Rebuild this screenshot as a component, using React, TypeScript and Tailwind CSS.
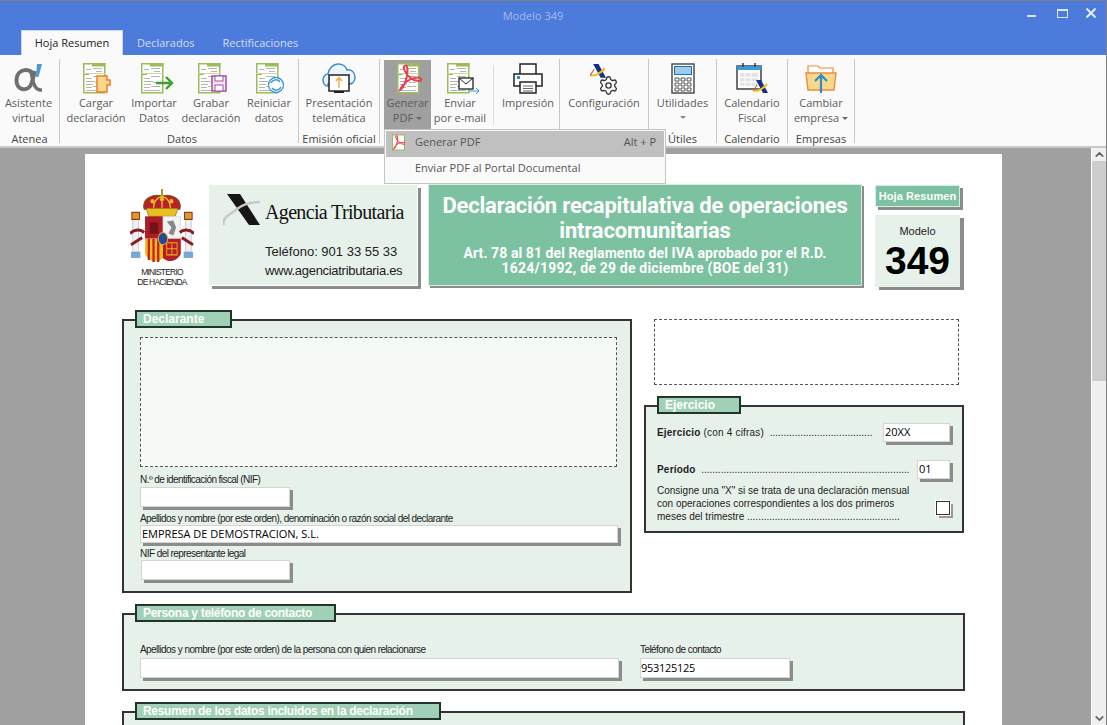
import type { ReactNode } from "react";
import { ChevronDown, ChevronUp, Settings } from "lucide-react";

const DocBase = ({ children, narrow }: { children?: ReactNode; narrow?: boolean }) => (
  <svg className="overflow-visible" width={narrow ? 22 : 26} height="31" viewBox={narrow ? "0 0 22 31" : "0 0 26 31"} fill="none">
    <rect x="0.75" y="0.75" width="21" height="29" fill="#fff" stroke="#9cbc59" strokeWidth="1.5" />
    <rect x="9" y="0" width="13.5" height="3.5" fill="#9cbc59" />
    <rect x="0" y="10" width="6" height="2" fill="#9cbc59" />
    <line x1="0" y1="10.5" x2="22" y2="10.5" stroke="#c9d9a0" />
    <path d="M3 6.5h5M10 5.5h9M13 8.5h6M10 13.5h9M3 15.5h6M3 18.5h9M12 19.5h7M3 21.5h7M3 24.5h6M10 23.5h9M3 27.5h16" stroke="#b5b5b5" />
    {children}
  </svg>
);

const AlphaIcon = () => (
  <svg width="30" height="31" viewBox="0 0 30 31" fill="none">
    <path d="M21 13C18 5 3 4 2.5 17C2 28 15 30 18 19L21 8" stroke="#6f6f6f" strokeWidth="4" />
    <path d="M17 9C19 18 20 28 28 27" stroke="#6f6f6f" strokeWidth="3.4" />
    <path d="M23 1H28L24.5 14H22Z" fill="#4b9ad4" />
  </svg>
);

const CloudIcon = () => (
  <svg width="34" height="31" viewBox="0 0 34 31" fill="none">
    <path d="M6 23C2 23 1 19 1 17C1 13 4 11 6 11C7 5 11 1 16 1C21 1 24 4 25 7C29 6 33 9 33 14C33 19 30 21 27 21H6Z" fill="#eaf5fc" stroke="#3b8fd0" strokeWidth="1.5" />
    <rect x="7" y="12" width="20" height="16" fill="#fff" stroke="#222" strokeWidth="1.5" />
    <rect x="12" y="28" width="10" height="2" fill="#222" />
    <path d="M17 25V15M14 18L17 14.5L20 18" stroke="#f0a830" strokeWidth="1.3" />
  </svg>
);

const PrinterIcon = () => (
  <svg width="30" height="31" viewBox="0 0 30 31" fill="none" stroke="#222" strokeWidth="1.5">
    <path d="M7 11V1H23V11" fill="#fff" />
    <path d="M7 23H1V11H29V23H23" fill="#fff" />
    <rect x="7" y="19" width="16" height="11" fill="#fff" />
    <path d="M10 23H20M10 25.5H20M10 28H20" strokeWidth="1" stroke="#666" />
    <rect x="4" y="13" width="3" height="3" fill="#2a8fd0" stroke="none" />
  </svg>
);

const AeatMark = ({ className, size = 16 }: { className?: string; size?: number }) => (
  <svg className={className} width={size} height={size} viewBox="0 0 16 16" fill="none">
    <path d="M3 0H8L15 13H10Z" fill="#10308c" />
    <path d="M0 10C3 12 9 10 14 4" stroke="#f0c020" strokeWidth="2" />
    <path d="M0 11L4 5" stroke="#e04040" strokeWidth="1" />
  </svg>
);

const ConfigIcon = () => (
  <span className="relative block w-[32px] h-[31px]">
    <AeatMark size={17} className="absolute left-[2px] top-[1px]" />
    <Settings size={21} strokeWidth={1.5} color="#333" className="absolute left-[10px] top-[12px]" />
  </span>
);

const CalculatorIcon = () => (
  <svg width="24" height="31" viewBox="0 0 24 31" fill="none">
    <rect x="1" y="1" width="22" height="29" fill="#fff" stroke="#444" strokeWidth="1.4" />
    <rect x="3.5" y="3.5" width="17" height="8" fill="#9ccdf0" stroke="#1f70b0" />
    <path d="M4 15h4v3H4zM10 15h4v3h-4zM16 15h4v3h-4zM4 20h4v3H4zM10 20h4v3h-4zM16 20h4v3h-4zM4 25h4v3H4zM10 25h4v3h-4zM16 25h4v3h-4z" stroke="#555" />
  </svg>
);

const CalendarIcon = () => (
  <span className="relative block w-[32px] h-[31px]">
    <svg width="26" height="28" viewBox="0 0 26 28" fill="none">
      <rect x="1" y="3" width="24" height="23" fill="#fff" stroke="#333" strokeWidth="1.4" />
      <rect x="1" y="3" width="24" height="4" fill="#3a9ad6" />
      <path d="M7 0V4M19 0V4" stroke="#333" strokeWidth="1.4" />
      <path d="M4 10h18v13H4z" fill="#e4e4e4" />
      <path d="M4 14.5H22M4 19H22M9 10V23M15 10V23" stroke="#fff" />
    </svg>
    <AeatMark className="absolute left-[17px] top-[17px]" />
  </span>
);

const FolderIcon = () => (
  <svg width="32" height="29" viewBox="0 0 32 29" fill="none">
    <path d="M3 8V1H13L15 3H28V8" fill="#fff" stroke="#ef8a3c" strokeWidth="1.2" />
    <path d="M1 8H31L29 25H3Z" fill="#f8d98c" stroke="#ef8a3c" strokeWidth="1.4" />
    <path d="M16 28V11M10 16L16 10L22 16" stroke="#2a8ccc" strokeWidth="2.2" />
  </svg>
);

const PdfSwirl = () => (
  <path d="M3 27C7 25 12 11 10 4C9 1 6 3 7 6C9 12 16 19 23 18C26 17 24 14 20 14.5C13 15 6 20 3 27Z" stroke="#e8404f" strokeWidth="2" fill="none" />
);

const ShieldLogo = () => (
  <svg width="64" height="75" viewBox="0 0 68 74" preserveAspectRatio="none" fill="none">
    <path d="M34 0V6" stroke="#b08a20" strokeWidth="2" />
    <path d="M15 20C12 10 24 4 34 7C44 4 56 10 53 20Z" fill="#b8202a" stroke="#7a5a10" />
    <path d="M34 7C28 9 25 13 25 19M34 7C40 9 43 13 43 19M34 7V19" stroke="#eac020" strokeWidth="1.4" />
    <path d="M17 19H51L48 27H20Z" fill="#eac020" stroke="#7a5a10" strokeWidth="0.6" />
    <circle cx="24" cy="12" r="2.2" fill="#eac020" />
    <circle cx="34" cy="10" r="2.2" fill="#eac020" />
    <circle cx="44" cy="12" r="2.2" fill="#eac020" />
    <rect x="16" y="27" width="19" height="22" fill="#b01c24" />
    <rect x="35" y="27" width="19" height="22" fill="#f2f2f2" stroke="#ccc" strokeWidth="0.5" />
    <path d="M39 32L46 31L49 38L46 46L41 44L44 38Z" fill="#888" />
    <path d="M16 49H35V68C28 74 20 72 16 64Z" fill="#eeba24" />
    <path d="M20 49V70M25 49V72M30 49V72" stroke="#c4202a" strokeWidth="2.4" />
    <path d="M35 49H54V64C50 72 40 73 35 68Z" fill="#b81c24" />
    <path d="M39 53H50V65H39ZM39 59H50M44.5 53V65" stroke="#e2b020" />
    <path d="M21 33H30V44H21Z" fill="#701418" />
    <ellipse cx="35" cy="49" rx="5" ry="6" fill="#2248a0" stroke="#e2b020" />
    <rect x="3" y="30" width="6" height="32" fill="#f0f0f0" stroke="#ccc" />
    <rect x="59" y="30" width="6" height="32" fill="#f0f0f0" stroke="#ccc" />
    <rect x="2" y="23" width="8" height="7" fill="#d8a020" stroke="#8a2020" />
    <rect x="58" y="23" width="8" height="7" fill="#d8a020" stroke="#8a2020" />
    <path d="M0 44C5 39 12 40 15 43M1 55L13 48M68 44C63 39 56 40 53 43M67 55L55 48" stroke="#8a1c24" strokeWidth="3" />
    <rect x="1" y="62" width="10" height="6" fill="#7aa6d6" />
    <rect x="57" y="62" width="10" height="6" fill="#7aa6d6" />
  </svg>
);

const AgenciaLogo = () => (
  <svg width="40" height="33" viewBox="0 0 40 33" fill="none">
    <path d="M4 0H17L37 31H26Z" fill="#161616" />
    <path d="M1 31C-2 24 8 20 14 15C20 10 30 8 37 8" stroke="#c8c8c8" strokeWidth="2.5" />
  </svg>
);

const RibbonBtn = ({ icon, lines, w, arrow, active }: { icon: ReactNode; lines: string[]; w: string; arrow?: boolean; active?: boolean }) => (
  <div className={`${w} h-[69px] flex flex-col items-center text-[11px] leading-[15px] text-[#5a5a5a] shrink-0 ${active ? "bg-[#a0a0a0]" : ""}`}>
    <div className="h-[35px] flex items-end justify-center pb-[1px]">{icon}</div>
    {lines.map((line, i) => (
      <div key={line} className="whitespace-nowrap flex items-center">
        {line}
        {arrow && lines.length > 1 && i === lines.length - 1 && <span className="ml-[3px] mt-[2px] border-x-[3px] border-t-[3px] border-x-transparent border-t-[#666]" />}
      </div>
    ))}
    {arrow && lines.length === 1 && <span className="mt-[6px] border-x-[3px] border-t-[3px] border-x-transparent border-t-[#888]" />}
  </div>
);

const RibbonGroup = ({ label, w, children, pad }: { label: string; w: string; children: ReactNode; pad?: string }) => (
  <div className={`${w} ${pad ?? ""} mt-[4px] h-[84px] pt-[1px] border-r border-[#c8c8c8] shrink-0 flex flex-col`}>
    <div className="flex h-[72px] shrink-0">{children}</div>
    <div className="text-center text-[11px] leading-[14px] text-[#444] whitespace-nowrap">{label}</div>
  </div>
);

const PdfMenu = () => (
  <div className="absolute left-0 top-[69px] z-20 w-[282px] h-[55px] bg-[#fafafa] border border-[#c4c4c4] p-[1px] text-[11px] text-[#555]">
    <div className="h-[26px] bg-[#c0c0c0] flex items-center justify-between pr-[8px] pb-[3px]">
      <div className="flex items-center">
        <span className="ml-[6px] w-[23px] flex">
          <svg width="13" height="17" viewBox="0 0 24 30" fill="none">
            <rect x="1" y="1" width="22" height="28" fill="#fff" stroke="#9cbc59" strokeWidth="2" />
            <PdfSwirl />
          </svg>
        </span>
        Generar PDF
      </div>
      <span>Alt + P</span>
    </div>
    <div className="h-[26px] flex items-center pl-[29px] pb-[3px]">Enviar PDF al Portal Documental</div>
  </div>
);

const Section = ({ title, tab, className, children }: { title: string; tab: string; className: string; children: ReactNode }) => (
  <div className={`relative bg-[#e6f1ea] border-2 border-[#333] ${className}`}>
    <div className={`absolute left-[11px] -top-[11px] h-[18px] ${tab} bg-[#a0d0b5] border-2 border-[#22332a] pl-[6px] text-white font-bold text-[12px] leading-[14px] whitespace-nowrap`}>
      {title}
    </div>
    {children}
  </div>
);

const Label = ({ children, className }: { children: ReactNode; className?: string }) => (
  <div className={`text-[10px] tracking-[-0.56px] leading-[12px] text-[#222] whitespace-nowrap ${className ?? ""}`}>{children}</div>
);

const Field = ({ value, className }: { value?: string; className: string }) => (
  <div className={`bg-white border border-[#d4d4d4] shadow-[3px_3px_0_#8c8c8c] text-[11px] text-black font-['Open_Sans',sans-serif] flex items-center whitespace-nowrap ${className}`}>
    {value}
  </div>
);

export default function App() {
  return (
    <div className="w-[1107px] h-[725px] overflow-hidden flex flex-col bg-[#a0a0a0] border-t border-r border-[#808080] font-['Open_Sans',sans-serif]">
      <div className="h-[54px] shrink-0 bg-[#4c7bdc] flex flex-col">
        <div className="h-[29px] flex">
          <div className="w-[1020px] pl-[46px] text-center text-[11px] leading-[29px] text-[#a3bcef]">Modelo 349</div>
          <div className="flex">
            <div className="w-[7px]" />
            <div className="w-[9px] h-[2px] bg-[#dde5f7] mt-[14px]" />
            <div className="w-[11px] h-[9px] border border-t-2 border-[#dde5f7] mt-[8px] ml-[21px]" />
            <svg className="mt-[7px] ml-[18px]" width="10" height="10" viewBox="0 0 10 10" fill="none" stroke="#e6ecf9" strokeWidth="2">
              <path d="M0.5 0.5L9.5 9.5M9.5 0.5L0.5 9.5" />
            </svg>
          </div>
        </div>
        <div className="h-[25px] flex items-stretch pl-[21px] text-[11px] text-[#d5dff6]">
          <div className="w-[102px] bg-[#fafafa] text-[#222] flex items-center justify-center border-x border-t border-[#c8d4ee] pt-[1px]">Hoja Resumen</div>
          <div className="ml-[14px] flex items-center pt-[1px]">Declarados</div>
          <div className="ml-[28px] flex items-center pt-[1px]">Rectificaciones</div>
        </div>
      </div>

      <div className="h-[93px] shrink-0 bg-[#fafafa] border-b-2 border-[#c8c8c8] flex relative z-10">
        <RibbonGroup label="Atenea" w="w-[60px]">
          <RibbonBtn w="w-[57px]" icon={<AlphaIcon />} lines={["Asistente", "virtual"]} />
        </RibbonGroup>
        <RibbonGroup label="Datos" w="w-[239px]" pad="pl-[6px]">
          <RibbonBtn w="w-[60px]" icon={<DocBase><g transform="translate(13 12)"><path d="M1 1H11V5H14V10H11V17H1Z" fill="#f8d98c" stroke="#ee7c2c" strokeWidth="1.5" /></g></DocBase>} lines={["Cargar", "declaración"]} />
          <RibbonBtn w="w-[56px]" icon={<DocBase><path d="M15 20H29M25 14L31 20L25 26" stroke="#3da02c" strokeWidth="2.4" /></DocBase>} lines={["Importar", "Datos"]} />
          <RibbonBtn w="w-[58px]" icon={<DocBase><rect x="14" y="13" width="14" height="15" fill="#f4e4f4" stroke="#a050a0" strokeWidth="1.5" /><rect x="17" y="13" width="8" height="5" fill="#fff" stroke="#a050a0" /><rect x="17" y="22" width="8" height="6" fill="#fff" stroke="#a050a0" /></DocBase>} lines={["Grabar", "declaración"]} />
          <RibbonBtn w="w-[58px]" icon={<DocBase><circle cx="20" cy="22" r="7.5" fill="#fff" stroke="#3a9ad6" strokeWidth="1.3" /><path d="M15 20C17 16 22 16 24 19M25 24C23 28 18 28 16 25" stroke="#3a9ad6" strokeWidth="1.5" /></DocBase>} lines={["Reiniciar", "datos"]} />
        </RibbonGroup>
        <RibbonGroup label="Emisión oficial" w="w-[81px]">
          <RibbonBtn w="w-[80px]" icon={<CloudIcon />} lines={["Presentación", "telemática"]} />
        </RibbonGroup>
        <RibbonGroup label="" w="w-[180px]" pad="pl-[4px]">
          <div className="relative">
            <RibbonBtn active w="w-[47px]" arrow icon={<DocBase narrow><PdfSwirl /></DocBase>} lines={["Generar", "PDF"]} />
            <PdfMenu />
          </div>
          <RibbonBtn w="w-[58px]" icon={<DocBase><rect x="12" y="15" width="14" height="11" fill="#fff" stroke="#222" strokeWidth="1.3" /><path d="M12 15L19 21L26 15" stroke="#222" /><path d="M22 28H32M29 25L32 28L29 31" stroke="#3a9ad6" /></DocBase>} lines={["Enviar", "por e-mail"]} />
          <div className="w-[1px] h-[60px] mt-[5px] mx-[4px] bg-[#dcdcdc] shrink-0" />
          <RibbonBtn w="w-[60px]" icon={<PrinterIcon />} lines={["Impresión"]} />
        </RibbonGroup>
        <RibbonGroup label="" w="w-[89px]">
          <RibbonBtn w="w-[88px]" icon={<ConfigIcon />} lines={["Configuración"]} />
        </RibbonGroup>
        <RibbonGroup label="Útiles" w="w-[68px]">
          <RibbonBtn w="w-[67px]" arrow icon={<CalculatorIcon />} lines={["Utilidades"]} />
        </RibbonGroup>
        <RibbonGroup label="Calendario" w="w-[71px]">
          <RibbonBtn w="w-[70px]" icon={<CalendarIcon />} lines={["Calendario", "Fiscal"]} />
        </RibbonGroup>
        <RibbonGroup label="Empresas" w="w-[67px]">
          <RibbonBtn w="w-[66px]" arrow icon={<FolderIcon />} lines={["Cambiar", "empresa"]} />
        </RibbonGroup>
      </div>

      <div className="flex-1 min-h-0 flex">
        <div className="flex-1 min-w-0 overflow-hidden pt-[6px] pl-[85px]">
          <div className="w-[917px] h-[600px] bg-white pt-[31px] pl-[37px] font-['Liberation_Sans',sans-serif]">
            {/* cabecera */}
            <div className="flex items-start">
              <div className="ml-[5px] w-[70px] flex flex-col items-center pt-[4px] text-[8.5px] tracking-[-0.8px] leading-[10px] text-[#222] text-center">
                <ShieldLogo />
                <div className="mt-[3px]">MINISTERIO</div>
                <div>DE HACIENDA</div>
              </div>
              <div className="ml-[12px] w-[209px] h-[101px] bg-[#e6f1ea] shadow-[3px_3px_0_#8c8c8c] border-r border-b border-white flex flex-col pl-[14px]">
                <div className="flex items-center pt-[9px] h-[41px]">
                  <AgenciaLogo />
                  <span className="ml-[2px] mt-[3px] font-['Liberation_Serif',serif] text-[20px] leading-[24px] text-[#111] whitespace-nowrap tracking-[-0.65px]">Agencia Tributaria</span>
                </div>
                <div className="pl-[42px] mt-[16px] text-[13px] leading-[19px] text-[#222] whitespace-nowrap">
                  <div>Teléfono: 901 33 55 33</div>
                  <div className="tracking-[-0.3px]">www.agenciatributaria.es</div>
                </div>
              </div>
              <div className="ml-[10px] w-[434px] h-[102px] bg-[#7cc2a0] shadow-[2px_2px_0_#8c8c8c] border border-[#dbeae2] -mt-[1px] text-white font-bold text-center flex flex-col items-center pt-[8px] font-['Roboto',sans-serif]">
                <div className="text-[22px] leading-[25px] tracking-[-0.2px] whitespace-nowrap">Declaración recapitulativa de operaciones</div>
                <div className="text-[22px] leading-[25px] tracking-[-0.2px]">intracomunitarias</div>
                <div className="mt-[3px] text-[14px] leading-[15px] tracking-[0.08px] whitespace-nowrap">Art. 78 al 81 del Reglamento del IVA aprobado por el R.D.</div>
                <div className="text-[14px] leading-[15px] tracking-[0.2px] whitespace-nowrap">1624/1992, de 29 de diciembre (BOE del 31)</div>
              </div>
              <div className="ml-[13px] w-[85px] flex flex-col">
                <div className="h-[22px] bg-[#7cc2a0] shadow-[3px_3px_0_#8c8c8c] border border-[#dbeae2] text-white font-bold text-[11px] tracking-[0.1px] leading-[20px] text-center whitespace-nowrap">Hoja Resumen</div>
                <div className="mt-[8px] h-[72px] bg-[#e6f1ea] shadow-[4px_3px_0_#8c8c8c] flex flex-col items-center pt-[9px] text-[#222]">
                  <div className="text-[11px] leading-[14px]">Modelo</div>
                  <div className="text-[39px] leading-[40px] font-bold text-black mt-[3px]">349</div>
                </div>
              </div>
            </div>

            {/* declarante y ejercicio */}
            <div className="flex items-start mt-[32px]">
              <Section title="Declarante" tab="w-[97px]" className="w-[510px] h-[274px] pt-[16px] pl-[16px]">
                <div className="w-[477px] h-[130px] border border-dashed border-[#555] bg-[#f6faf7]" />
                <Label className="mt-[7px]">N.º de identificación fiscal (NIF)</Label>
                <Field className="w-[150px] h-[20px] mt-[1px]" />
                <Label className="mt-[6px]">Apellidos y nombre (por este orden), denominación o razón social del declarante</Label>
                <Field className="w-[478px] h-[18px] pl-[1px]" value="EMPRESA DE DEMOSTRACION, S.L." />
                <Label className="mt-[5px]">NIF del representante legal</Label>
                <Field className="w-[149px] h-[20px] ml-[1px]" />
              </Section>
              <div className="ml-[12px] w-[320px] flex flex-col">
                <div className="ml-[10px] w-[305px] h-[66px] border border-dashed border-[#555]" />
                <Section title="Ejercicio" tab="w-[84px]" className="mt-[20px] h-[128px] pt-[16px] pl-[11px] pr-[12px] text-[10px] text-[#222]">
                  <div className="flex items-center justify-between h-[19px]">
                    <div className="whitespace-nowrap"><span className="tracking-[0.2px]"><b>Ejercicio</b> (con 4 cifras)</span>&nbsp;&nbsp;{".".repeat(37)}</div>
                    <Field className="w-[67px] h-[19px] pl-[1px]" value="20XX" />
                  </div>
                  <div className="flex items-center justify-between h-[19px] mt-[18px]">
                    <div className="whitespace-nowrap"><b className="tracking-[0.2px]">Período</b>&nbsp;&nbsp;{".".repeat(75)}</div>
                    <Field className="w-[33px] h-[19px] pl-[1px]" value="01" />
                  </div>
                  <div className="flex justify-between mt-[5px]">
                    <div className="leading-[13px] whitespace-nowrap">
                      <div>Consigne una "X" si se trata de una declaración mensual</div>
                      <div>con operaciones correspondientes a los dos primeros</div>
                      <div>meses del trimestre&nbsp;{".".repeat(55)}</div>
                    </div>
                    <div className="mt-[17px] w-[14px] h-[14px] bg-white border border-[#333] shadow-[0_0_0_1px_#fff,3px_3px_0_#999]" />
                  </div>
                </Section>
              </div>
            </div>

            {/* persona de contacto */}
            <Section title="Persona y teléfono de contacto" tab="w-[201px] tracking-[-0.3px]" className="mt-[20px] w-[843px] h-[78px] pt-[29px] pl-[16px]">
              <div className="flex">
                <div>
                  <Label>Apellidos y nombre (por este orden) de la persona con quien relacionarse</Label>
                  <Field className="w-[479px] h-[20px] mt-[2px]" />
                </div>
                <div className="ml-[21px]">
                  <Label>Teléfono de contacto</Label>
                  <Field className="w-[150px] h-[20px] mt-[2px] tracking-[-0.3px]" value="953125125" />
                </div>
              </div>
            </Section>

            <Section title="Resumen de los datos incluidos en la declaración" tab="w-[306px] tracking-[-0.3px]" className="mt-[20px] w-[843px] h-[100px]">
              <div />
            </Section>
          </div>
        </div>
        <div className="w-[15px] shrink-0 bg-[#f0f0f0] border-l border-white flex flex-col relative">
          <div className="h-[13px] flex items-center justify-center"><ChevronUp size={13} strokeWidth={3} color="#606060" /></div>
          <div className="h-[220px] bg-[#cdcdcd]" />
          <div className="mt-auto h-[14px] flex items-center justify-center"><ChevronDown size={13} strokeWidth={3} color="#606060" /></div>
        </div>
      </div>
    </div>
  );
}
